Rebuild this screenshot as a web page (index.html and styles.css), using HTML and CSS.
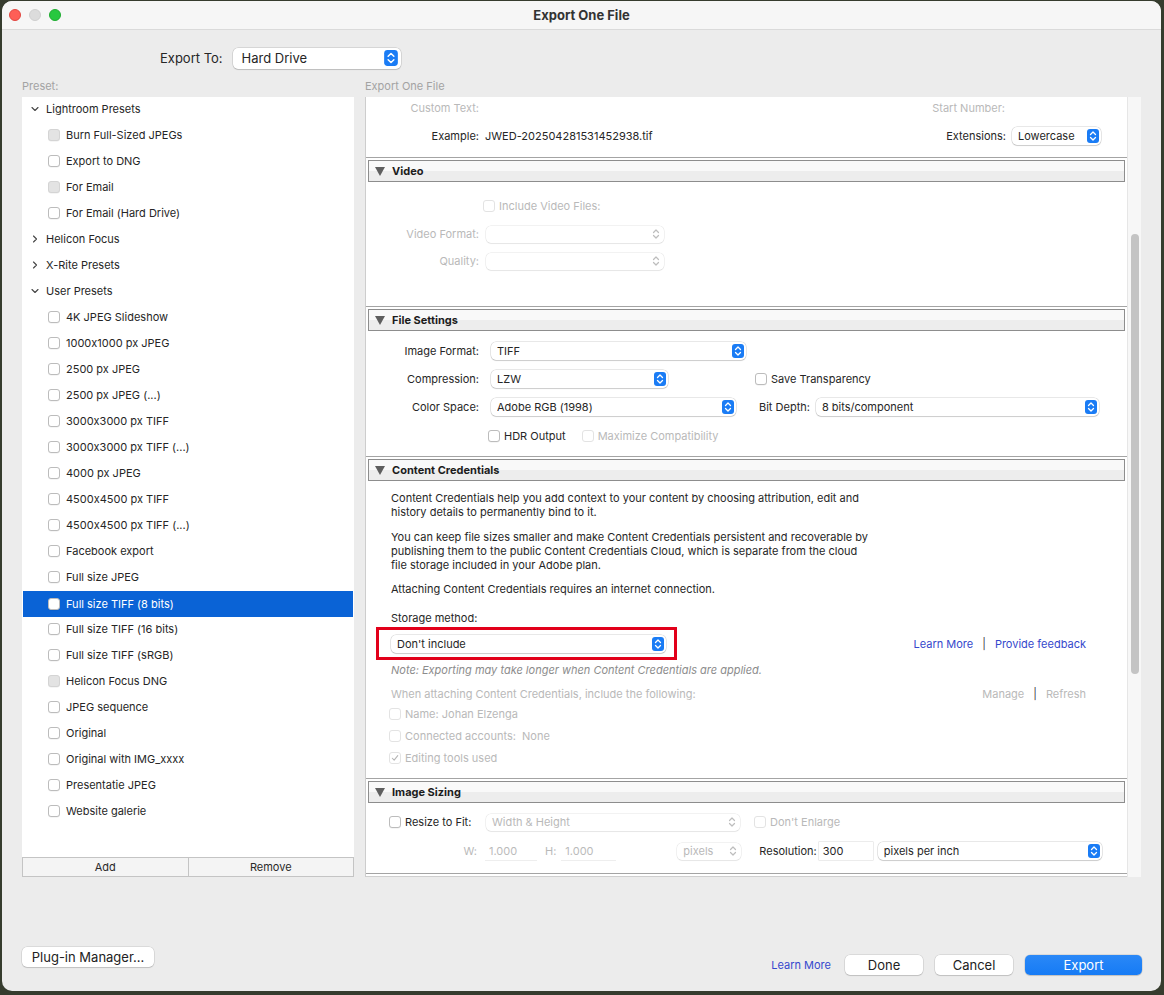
FILE: index.html
```html
<!DOCTYPE html>
<html lang="en">
<head>
    <meta charset="UTF-8">
    <title>Export One File</title>
    <link rel="stylesheet" href="styles.css">
</head>
<body>
<div class="window">
    <div class="titlebar">
        <div class="lights">
            <span class="light red"></span>
            <span class="light gray"></span>
            <span class="light green"></span>
        </div>
        <div class="title">Export One File</div>
        <div></div>
    </div>

    <div class="export-to">
        <span>Export To:</span>
        <div class="popup popup-big">
            <span class="popup-text">Hard Drive</span>
            <svg class="step" viewBox="0 0 12 14"><rect width="12" height="14" rx="3" fill="#1a7cf5"/><path d="M3.5 5.5 6 3l2.5 2.5M3.5 8.5 6 11l2.5-2.5" fill="none" stroke="#fff" stroke-width="1.3" stroke-linecap="round" stroke-linejoin="round"/></svg>
        </div>
    </div>

    <div class="columns">
        <div class="col-left">
            <div class="col-label">Preset:</div>
            <div class="preset-list">
                <div class="row group"><svg class="chev" viewBox="0 0 8 8"><path d="M1 2.5 4 5.5 7 2.5" fill="none" stroke="#444" stroke-width="1.1" stroke-linecap="round" stroke-linejoin="round"/></svg>Lightroom Presets</div>
                <div class="row item"><span class="cb cb-gray"></span>Burn Full-Sized JPEGs</div>
                <div class="row item"><span class="cb"></span>Export to DNG</div>
                <div class="row item"><span class="cb cb-gray"></span>For Email</div>
                <div class="row item"><span class="cb"></span>For Email (Hard Drive)</div>
                <div class="row group"><svg class="chev" viewBox="0 0 8 8"><path d="M2.5 1 5.5 4 2.5 7" fill="none" stroke="#444" stroke-width="1.1" stroke-linecap="round" stroke-linejoin="round"/></svg>Helicon Focus</div>
                <div class="row group"><svg class="chev" viewBox="0 0 8 8"><path d="M2.5 1 5.5 4 2.5 7" fill="none" stroke="#444" stroke-width="1.1" stroke-linecap="round" stroke-linejoin="round"/></svg>X-Rite Presets</div>
                <div class="row group"><svg class="chev" viewBox="0 0 8 8"><path d="M1 2.5 4 5.5 7 2.5" fill="none" stroke="#444" stroke-width="1.1" stroke-linecap="round" stroke-linejoin="round"/></svg>User Presets</div>
                <div class="row item"><span class="cb"></span>4K JPEG Slideshow</div>
                <div class="row item"><span class="cb"></span>1000x1000 px JPEG</div>
                <div class="row item"><span class="cb"></span>2500 px JPEG</div>
                <div class="row item"><span class="cb"></span>2500 px JPEG (...)</div>
                <div class="row item"><span class="cb"></span>3000x3000 px TIFF</div>
                <div class="row item"><span class="cb"></span>3000x3000 px TIFF (...)</div>
                <div class="row item"><span class="cb"></span>4000 px JPEG</div>
                <div class="row item"><span class="cb"></span>4500x4500 px TIFF</div>
                <div class="row item"><span class="cb"></span>4500x4500 px TIFF (...)</div>
                <div class="row item"><span class="cb"></span>Facebook export</div>
                <div class="row item"><span class="cb"></span>Full size JPEG</div>
                <div class="row item selected"><span class="cb"></span>Full size TIFF (8 bits)</div>
                <div class="row item"><span class="cb"></span>Full size TIFF (16 bits)</div>
                <div class="row item"><span class="cb"></span>Full size TIFF (sRGB)</div>
                <div class="row item"><span class="cb cb-gray"></span>Helicon Focus DNG</div>
                <div class="row item"><span class="cb"></span>JPEG sequence</div>
                <div class="row item"><span class="cb"></span>Original</div>
                <div class="row item"><span class="cb"></span>Original with IMG_xxxx</div>
                <div class="row item"><span class="cb"></span>Presentatie JPEG</div>
                <div class="row item"><span class="cb"></span>Website galerie</div>
            </div>
            <div class="list-buttons">
                <div class="list-btn">Add</div>
                <div class="list-btn">Remove</div>
            </div>
        </div>

        <div class="col-right">
            <div class="col-label">Export One File</div>
            <div class="panel">
                <div class="panel-content">
                    <!-- file naming (scrolled) -->
                    <div class="sec-top">
                        <div class="frow frow-20 start-row">
                            <span class="flabel dim">Custom Text:</span>
                            <span class="spacer"></span>
                            <span class="dim start-num">Start Number:</span>
                        </div>
                        <div class="frow frow-20 example-row">
                            <span class="flabel">Example:</span>
                            <span class="example-val">JWED-202504281531452938.tif</span>
                            <span class="spacer"></span>
                            <span>Extensions:</span>
                            <div class="popup sel-ext">
                                <span class="popup-text">Lowercase</span>
                                <svg class="step" viewBox="0 0 12 14"><rect width="12" height="14" rx="3" fill="#1a7cf5"/><path d="M3.5 5.5 6 3l2.5 2.5M3.5 8.5 6 11l2.5-2.5" fill="none" stroke="#fff" stroke-width="1.3" stroke-linecap="round" stroke-linejoin="round"/></svg>
                            </div>
                        </div>
                    </div>

                    <!-- video -->
                    <div class="sec-head">
                        <svg class="tri" viewBox="0 0 10 9"><path d="M0 0H10L5 9Z" fill="#5f5f5f"/></svg>Video
                    </div>
                    <div class="sec-body body-video">
                        <div class="frow">
                            <span class="cb cb-faint cb-video"></span><span class="dim cb-text">Include Video Files:</span>
                        </div>
                        <div class="frow mt10">
                            <span class="flabel dim">Video Format:</span>
                            <div class="popup popup-dis sel-video"><span class="popup-text"></span><svg class="step" viewBox="0 0 12 14"><path d="M3.5 5.5 6 3l2.5 2.5M3.5 8.5 6 11l2.5-2.5" fill="none" stroke="#bdbdbd" stroke-width="1.2" stroke-linecap="round" stroke-linejoin="round"/></svg></div>
                        </div>
                        <div class="frow mt9">
                            <span class="flabel dim">Quality:</span>
                            <div class="popup popup-dis sel-video"><span class="popup-text"></span><svg class="step" viewBox="0 0 12 14"><path d="M3.5 5.5 6 3l2.5 2.5M3.5 8.5 6 11l2.5-2.5" fill="none" stroke="#bdbdbd" stroke-width="1.2" stroke-linecap="round" stroke-linejoin="round"/></svg></div>
                        </div>
                    </div>

                    <!-- file settings -->
                    <div class="sec-head">
                        <svg class="tri" viewBox="0 0 10 9"><path d="M0 0H10L5 9Z" fill="#5f5f5f"/></svg>File Settings
                    </div>
                    <div class="sec-body body-file">
                        <div class="frow">
                            <span class="flabel">Image Format:</span>
                            <div class="popup sel-format">
                                <span class="popup-text">TIFF</span>
                                <svg class="step" viewBox="0 0 12 14"><rect width="12" height="14" rx="3" fill="#1a7cf5"/><path d="M3.5 5.5 6 3l2.5 2.5M3.5 8.5 6 11l2.5-2.5" fill="none" stroke="#fff" stroke-width="1.3" stroke-linecap="round" stroke-linejoin="round"/></svg>
                            </div>
                        </div>
                        <div class="frow mt10">
                            <span class="flabel">Compression:</span>
                            <div class="popup sel-comp">
                                <span class="popup-text">LZW</span>
                                <svg class="step" viewBox="0 0 12 14"><rect width="12" height="14" rx="3" fill="#1a7cf5"/><path d="M3.5 5.5 6 3l2.5 2.5M3.5 8.5 6 11l2.5-2.5" fill="none" stroke="#fff" stroke-width="1.3" stroke-linecap="round" stroke-linejoin="round"/></svg>
                            </div>
                            <span class="cb cb-transp"></span><span class="cb-text">Save Transparency</span>
                        </div>
                        <div class="frow mt10">
                            <span class="flabel">Color Space:</span>
                            <div class="popup sel-space">
                                <span class="popup-text">Adobe RGB (1998)</span>
                                <svg class="step" viewBox="0 0 12 14"><rect width="12" height="14" rx="3" fill="#1a7cf5"/><path d="M3.5 5.5 6 3l2.5 2.5M3.5 8.5 6 11l2.5-2.5" fill="none" stroke="#fff" stroke-width="1.3" stroke-linecap="round" stroke-linejoin="round"/></svg>
                            </div>
                            <span class="bit-label">Bit Depth:</span>
                            <div class="popup sel-bits">
                                <span class="popup-text">8 bits/component</span>
                                <svg class="step" viewBox="0 0 12 14"><rect width="12" height="14" rx="3" fill="#1a7cf5"/><path d="M3.5 5.5 6 3l2.5 2.5M3.5 8.5 6 11l2.5-2.5" fill="none" stroke="#fff" stroke-width="1.3" stroke-linecap="round" stroke-linejoin="round"/></svg>
                            </div>
                        </div>
                        <div class="frow mt11">
                            <span class="cb cb-hdr"></span><span class="cb-text">HDR Output</span>
                            <span class="cb cb-faint cb-max"></span><span class="dim cb-text">Maximize Compatibility</span>
                        </div>
                    </div>

                    <!-- content credentials -->
                    <div class="sec-head">
                        <svg class="tri" viewBox="0 0 10 9"><path d="M0 0H10L5 9Z" fill="#5f5f5f"/></svg>Content Credentials
                    </div>
                    <div class="sec-body body-cc">
                        <p>Content Credentials help you add context to your content by choosing attribution, edit and<br>history details to permanently bind to it.</p>
                        <p class="mt11">You can keep file sizes smaller and make Content Credentials persistent and recoverable by<br>publishing them to the public Content Credentials Cloud, which is separate from the cloud<br>file storage included in your Adobe plan.</p>
                        <p class="mt10">Attaching Content Credentials requires an internet connection.</p>
                        <p class="storage">Storage method:</p>
                        <div class="storage-row">
                            <div class="red-box">
                                <div class="popup sel-storage">
                                    <span class="popup-text">Don't include</span>
                                    <svg class="step" viewBox="0 0 12 14"><rect width="12" height="14" rx="3" fill="#1a7cf5"/><path d="M3.5 5.5 6 3l2.5 2.5M3.5 8.5 6 11l2.5-2.5" fill="none" stroke="#fff" stroke-width="1.3" stroke-linecap="round" stroke-linejoin="round"/></svg>
                                </div>
                            </div>
                            <div class="links">
                                <a class="link">Learn More</a><span class="bar">|</span><a class="link">Provide feedback</a>
                            </div>
                        </div>
                        <p class="note">Note: Exporting may take longer when Content Credentials are applied.</p>
                        <div class="attach-row">
                            <span class="dim">When attaching Content Credentials, include the following:</span>
                            <div class="links dim">
                                <span>Manage</span><span class="bar">|</span><span>Refresh</span>
                            </div>
                        </div>
                        <div class="frow cc-check mt4"><span class="cb cb-faint"></span><span class="dim cb-text">Name: Johan Elzenga</span></div>
                        <div class="frow cc-check mt4"><span class="cb cb-faint"></span><span class="dim cb-text">Connected accounts:&nbsp;&nbsp;None</span></div>
                        <div class="frow cc-check mt4">
                            <span class="cb cb-faint"><svg viewBox="0 0 12 12"><path d="M2.8 6.3 5 8.6 9.3 3.2" fill="none" stroke="#b5b5b5" stroke-width="1.3" stroke-linecap="round" stroke-linejoin="round"/></svg></span><span class="dim cb-text">Editing tools used</span>
                        </div>
                    </div>

                    <!-- image sizing -->
                    <div class="sec-head">
                        <svg class="tri" viewBox="0 0 10 9"><path d="M0 0H10L5 9Z" fill="#5f5f5f"/></svg>Image Sizing
                    </div>
                    <div class="sec-body body-size">
                        <div class="frow size-row1">
                            <span class="cb"></span><span class="cb-text resize-label">Resize to Fit:</span>
                            <div class="popup popup-dis sel-wh">
                                <span class="popup-text dim">Width &amp; Height</span>
                                <svg class="step" viewBox="0 0 12 14"><path d="M3.5 5.5 6 3l2.5 2.5M3.5 8.5 6 11l2.5-2.5" fill="none" stroke="#bdbdbd" stroke-width="1.2" stroke-linecap="round" stroke-linejoin="round"/></svg>
                            </div>
                            <span class="cb cb-faint cb-enlarge"></span><span class="dim cb-text">Don't Enlarge</span>
                        </div>
                        <div class="frow mt11">
                            <span class="flabel-w dim">W:</span>
                            <span class="field field-dis field-w">1.000</span>
                            <span class="dim h-label">H:</span>
                            <span class="field field-dis field-h">1.000</span>
                            <div class="popup popup-dis sel-px">
                                <span class="popup-text dim">pixels</span>
                                <svg class="step" viewBox="0 0 12 14"><path d="M3.5 5.5 6 3l2.5 2.5M3.5 8.5 6 11l2.5-2.5" fill="none" stroke="#bdbdbd" stroke-width="1.2" stroke-linecap="round" stroke-linejoin="round"/></svg>
                            </div>
                            <span class="res-label">Resolution:</span>
                            <span class="field field-res">300</span>
                            <div class="popup sel-ppi">
                                <span class="popup-text">pixels per inch</span>
                                <svg class="step" viewBox="0 0 12 14"><rect width="12" height="14" rx="3" fill="#1a7cf5"/><path d="M3.5 5.5 6 3l2.5 2.5M3.5 8.5 6 11l2.5-2.5" fill="none" stroke="#fff" stroke-width="1.3" stroke-linecap="round" stroke-linejoin="round"/></svg>
                            </div>
                        </div>
                    </div>
                    <div class="sec-next"></div>
                </div>
                <div class="scroll-track">
                    <div class="scroll-thumb"></div>
                </div>
            </div>
        </div>
    </div>

    <div class="footer">
        <div class="btn plugin-btn">Plug-in Manager...</div>
        <span class="spacer"></span>
        <a class="link foot-link">Learn More</a>
        <div class="btn btn-done">Done</div>
        <div class="btn btn-cancel">Cancel</div>
        <div class="btn btn-export">Export</div>
    </div>
</div>
</body>
</html>
```

FILE: styles.css
```css
*{
    margin: 0;
    padding: 0;
    box-sizing: border-box;
}
body{
    height: 995px;
    overflow: hidden;
    background-color: #363c2e;
    font-family: Inter, "Noto Sans", sans-serif;
    font-feature-settings: "calt" 0;
    font-size: 11px;
    color: #262626;
}
.window{
    width: 1159px;
    height: 990px;
    margin: 1px 0 0 2px;
    background-color: #ececec;
    border-radius: 10px;
    overflow: hidden;
    display: flex;
    flex-direction: column;
}
.titlebar{
    flex: none;
    height: 29px;
    background-color: #f6f6f6;
    border-bottom: 1px solid #dadada;
    display: grid;
    grid-template-columns: 1fr auto 1fr;
    align-items: center;
}
.lights{
    display: flex;
    gap: 8px;
    padding-left: 7px;
}
.light{
    width: 12px;
    height: 12px;
    border-radius: 50%;
}
.light.red{ background-color: #fe5f57; border: 0.5px solid #e14640; }
.light.gray{ background-color: #dcdcdc; border: 0.5px solid #cfcfcf; }
.light.green{ background-color: #28c840; border: 0.5px solid #1eab30; }
.title{
    font-size: 13px;
    font-weight: 700;
    color: #333;
}

/* export to */
.export-to{
    flex: none;
    display: flex;
    align-items: center;
    gap: 10px;
    margin-top: 17px;
    padding-left: 158px;
    height: 22px;
    font-size: 13px;
}

/* popup buttons */
.popup{
    flex: none;
    height: 18px;
    display: flex;
    align-items: center;
    background-color: #fff;
    border-radius: 5px;
    box-shadow: 0 0 0 0.5px rgba(0,0,0,0.18), 0 1px 1px rgba(0,0,0,0.12);
    padding: 0 2px 0 6px;
}
.popup-text{
    flex: 1;
    white-space: nowrap;
    overflow: hidden;
}
.step{
    flex: none;
    width: 12px;
    height: 14px;
}
.popup-big{
    width: 168px;
    height: 21px;
    padding-left: 9px;
}
.popup-big .step{
    width: 16px;
    height: 16px;
}
.popup-dis{
    box-shadow: 0 0 0 0.5px rgba(0,0,0,0.1), 0 1px 1px rgba(0,0,0,0.05);
    height: 17px;
}

/* columns */
.columns{
    flex: none;
    display: flex;
    gap: 11px;
    margin-top: 9px;
    padding: 0 19px 0 20px;
}
.col-left{
    width: 332px;
}
.col-right{
    width: 776px;
}
.col-label{
    height: 16px;
    line-height: 16px;
    margin-bottom: 3px;
    color: #a3a3a3;
}
.preset-list{
    height: 760px;
    background-color: #fff;
    overflow: hidden;
}
.row{
    height: 26px;
    display: flex;
    align-items: center;
    white-space: nowrap;
    padding-bottom: 2px;
}
.row.group{
    padding-left: 9px;
}
.chev{
    width: 8px;
    height: 8px;
    margin-right: 7px;
}
.row.item{
    padding-left: 26px;
}
.row.item .cb{
    margin-right: 6px;
}
.row.selected{
    background-color: #0a63d6;
    color: #fff;
    margin: 0 1px;
    padding-left: 25px;
    padding-bottom: 0;
}
.cb{
    flex: none;
    width: 12px;
    height: 12px;
    border-radius: 3px;
    background-color: #fff;
    border: 1px solid #bcbcbc;
    box-shadow: 0 0.5px 0.5px rgba(0,0,0,0.08);
    display: flex;
}
.cb svg{
    width: 10px;
    height: 10px;
}
.cb-gray{
    background-color: #e3e3e3;
    border-color: #d4d4d4;
}
.cb-faint{
    border-color: #e3e3e3;
    box-shadow: none;
}
.cb-text{
    margin-left: 4px;
    white-space: nowrap;
}
.list-buttons{
    display: flex;
    height: 20px;
}
.list-btn{
    flex: 1;
    background-color: #f4f4f4;
    border: 1px solid #c4c4c4;
    text-align: center;
    line-height: 18px;
    color: #2a2a2a;
}
.list-btn + .list-btn{
    border-left: none;
}

/* right panel */
.panel{
    height: 780px;
    display: flex;
    background-color: #fff;
    border-left: 1px solid #cdcdcd;
}
.panel-content{
    width: 761px;
    overflow: hidden;
}
.scroll-track{
    width: 14px;
    background-color: #f7f7f7;
    border-left: 1px solid #e6e6e6;
    padding: 137px 2px 0 3px;
}
.scroll-thumb{
    width: 8px;
    height: 440px;
    border-radius: 4px;
    background-color: #c4c4c4;
}
.dim{
    color: #b9b9b9;
}
.spacer{
    flex: 1;
}
.frow{
    height: 18px;
    display: flex;
    align-items: center;
    white-space: nowrap;
}
.frow-20{
    height: 20px;
}
.flabel{
    flex: none;
    width: 113px;
    text-align: right;
}
.mt4{ margin-top: 4px; }
.mt9{ margin-top: 9px; }
.mt10{ margin-top: 10px; }
.mt11{ margin-top: 11px; }

.sec-top{
    height: 61px;
    border-bottom: 1px solid #a4a4a4;
    padding-top: 1px;
}
.start-row{
    padding-right: 26px;
}
.start-num{
    margin-right: 96px;
}
.example-row{
    margin-top: 8px;
    padding-right: 26px;
}
.example-val{
    margin-left: 6px;
}
.sel-ext{
    width: 89px;
    margin-left: 6px;
}
.sec-head{
    height: 22px;
    margin: 2px 2px 0 2px;
    border: 1px solid #8d8d8d;
    background: linear-gradient(#f9f9f9 0, #f9f9f9 50%, #ededed 50%, #ededed 100%);
    display: flex;
    align-items: center;
    padding-left: 6px;
    font-weight: 700;
    color: #1c1c1c;
}
.tri{
    width: 10px;
    height: 9px;
    margin-right: 7px;
}
.sec-body{
    border-bottom: 1px solid #a4a4a4;
}
.body-video{
    height: 125px;
    padding-top: 15px;
}
.cb-video{
    margin-left: 117px;
}
.sel-video{
    width: 178px;
    margin-left: 7px;
}
.body-file{
    height: 126px;
    padding-top: 11px;
}
.sel-format{
    width: 255px;
    margin-left: 12px;
}
.sel-comp{
    width: 177px;
    margin-left: 12px;
}
.cb-transp{
    margin-left: 87px;
}
.sel-space{
    width: 245px;
    margin-left: 12px;
}
.bit-label{
    margin-left: 23px;
}
.sel-bits{
    width: 283px;
    margin-left: 6px;
}
.cb-hdr{
    margin-left: 122px;
}
.cb-max{
    margin-left: 16px;
}
.body-cc{
    height: 298px;
    padding: 10px 41px 0 25px;
}
.body-cc p{
    line-height: 14px;
    white-space: nowrap;
}
.body-cc .storage{
    margin-top: 15px;
}
.storage-row{
    margin-top: 2px;
    display: flex;
    align-items: center;
}
.red-box{
    margin-left: -15px;
    width: 301px;
    height: 33px;
    border: 3px solid #e2001a;
    padding: 5px 0 0 12px;
}
.sel-storage{
    width: 275px;
}
.links{
    margin-left: auto;
    display: flex;
    align-items: center;
}
.link{
    color: #3548cc;
}
.bar{
    margin: 0 9px;
    color: #444;
}
.body-cc .note{
    margin-top: 3px;
    font-style: italic;
    color: #8c8c8c;
}
.attach-row{
    margin-top: 10px;
    height: 14px;
    display: flex;
    align-items: center;
}
.cc-check{
    margin-left: -2px;
}
.body-size{
    height: 71px;
    padding-top: 10px;
}
.size-row1{
    padding-left: 23px;
}
.resize-label{
    width: 77px;
}
.sel-wh{
    width: 254px;
    margin-left: 4px;
}
.cb-enlarge{
    margin-left: 14px;
}
.flabel-w{
    width: 111px;
    text-align: right;
}
.field{
    height: 18px;
    line-height: 18px;
    padding-left: 4px;
    background-color: #fff;
    box-shadow: 0 0 0 0.5px rgba(0,0,0,0.15);
}
.field-dis{
    color: #bbb;
    box-shadow: 0 1px 0 #eeeeee;
}
.field-w{
    width: 52px;
    margin-left: 8px;
}
.h-label{
    margin-left: 8px;
}
.field-h{
    width: 55px;
    margin-left: 5px;
}
.sel-px{
    width: 64px;
    margin-left: 61px;
}
.res-label{
    margin-left: 18px;
}
.field-res{
    width: 54px;
    margin-left: 2px;
}
.sel-ppi{
    width: 224px;
    margin-left: 5px;
}
.sec-next{
    height: 3px;
    border-bottom: 1px solid #cfcfcf;
}

/* footer */
.footer{
    margin-top: auto;
    display: flex;
    align-items: flex-end;
    padding: 0 19px 16px 20px;
    font-size: 13px;
}
.btn{
    height: 20px;
    line-height: 20px;
    text-align: center;
    background-color: #fff;
    border-radius: 5px;
    box-shadow: 0 0 0 0.5px rgba(0,0,0,0.15), 0 1px 1px rgba(0,0,0,0.12);
    color: #222;
}
.plugin-btn{
    width: 132px;
    margin-bottom: 8px;
}
.foot-link{
    font-size: 11px;
    line-height: 20px;
    margin-right: 14px;
}
.btn-done{
    width: 78px;
}
.btn-cancel{
    width: 78px;
    margin-left: 12px;
}
.btn-export{
    width: 117px;
    margin-left: 12px;
    color: #fff;
    background: linear-gradient(#2a88f7, #167bf5);
}
```
